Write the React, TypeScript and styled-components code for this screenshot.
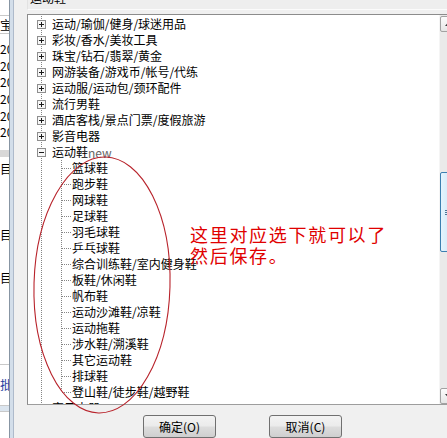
import styled, { createGlobalStyle } from 'styled-components';

const FONT = '"Noto Sans CJK SC", "Noto Sans", sans-serif';

const GlobalStyle = createGlobalStyle`
  html, body {
    margin: 0;
    padding: 0;
    overflow: hidden;
    background: #f0f0f0;
  }
`;

const Screen = styled.div`
  position: relative;
  width: 447px;
  height: 438px;
  overflow: hidden;
  display: flex;
  font-family: ${FONT};
  font-size: 12px;
  color: #000;
  background: #f0f0f0;
`;

/* strip of the window that lies behind the dialog */
const BackTable = styled.div`
  flex: none;
  width: 9px;
  display: flex;
  flex-direction: column;
  background: #fff;
  overflow: hidden;
`;

const BackRow = styled.div<{ $h: number; $line?: boolean; $band?: string; $blue?: boolean }>`
  flex: none;
  height: ${({ $h }) => $h}px;
  line-height: ${({ $h }) => $h}px;
  white-space: nowrap;
  color: ${({ $blue }) => ($blue ? '#1d3b9c' : '#000')};
  background: ${({ $band }) => $band || 'transparent'};
  border-bottom: ${({ $line }) => ($line ? '1px solid #c9c9c9' : 'none')};
`;

const WindowFrame = styled.div`
  flex: none;
  width: 3px;
  border-left: 1px solid #8795a3;
  border-right: 1px solid #aebacb;
  background: #d3deea;
`;

const Dialog = styled.div`
  flex: none;
  width: 460px;
  padding-left: 13px;
  display: flex;
  flex-direction: column;
`;

const TitleField = styled.div`
  height: 13px;
  border-left: 1px solid #e2e2e2;
  border-bottom: 1px solid #fbfbfb;
  background: #eeeeee;
  display: flex;
  align-items: flex-end;
  overflow: hidden;
  padding-left: 2px;
`;

const TitleText = styled.span`
  line-height: 16px;
  padding-bottom: 3px;
`;

const TreeBox = styled.div`
  margin-top: 4px;
  width: 428px;
  height: 389px;
  border: 1px solid #8c8c8c;
  border-bottom-color: #9d9d9d;
  background: #fff;
  display: flex;
`;

const TreeList = styled.div`
  flex: 1;
  padding-top: 1px;
  overflow: hidden;
`;

const Row = styled.div`
  height: 16px;
  display: flex;
  align-items: center;
  padding-left: 3px;
  white-space: nowrap;
`;

const Label = styled.span`
  margin-left: 1px;
  line-height: 16px;
`;

const Faint = styled.span`
  color: #666;
  vertical-align: -1px;
`;

const ScrollBar = styled.div`
  flex: none;
  width: 17px;
  padding-top: 1px;
  display: flex;
  flex-direction: column;
  background: #eaeaea;
  border-left: 1px solid #f5f5f5;
  box-sizing: border-box;
`;

const ArrowButton = styled.div`
  flex: none;
  height: 16px;
  border: 1px solid #a2a2a2;
  border-radius: 2px;
  box-sizing: border-box;
  background: linear-gradient(#fcfcfc, #e6e6e6);
  display: flex;
  align-items: center;
  justify-content: center;
`;

const Track = styled.div`
  flex: 1;
  display: flex;
  flex-direction: column;
`;

const Thumb = styled.div<{ $top: number; $size: number }>`
  margin-top: ${({ $top }) => $top}px;
  height: ${({ $size }) => $size}px;
  border: 1px solid #3c7fb1;
  border-radius: 2px;
  box-sizing: border-box;
  background: linear-gradient(to right, #e6f4fd, #c6e4f8);
  display: flex;
  align-items: center;
  justify-content: center;
`;

const Grip = styled.span`
  width: 7px;
  height: 5px;
  background: repeating-linear-gradient(to bottom, #4f7493 0 1px, transparent 1px 2px);
`;

const ButtonRow = styled.div`
  margin-top: 10px;
  padding-left: 116px;
  display: flex;
  gap: 53px;
`;

const Button = styled.div`
  width: 73px;
  height: 23px;
  box-sizing: border-box;
  border: 1px solid #707070;
  border-radius: 3px;
  background: linear-gradient(#f3f3f3 0%, #ebebeb 48%, #dddddd 52%, #cfcfcf 100%);
  display: flex;
  align-items: center;
  justify-content: center;
  line-height: 16px;
`;

const Annotation = styled.div`
  position: absolute;
  inset: 0;
  pointer-events: none;
`;

const Note = styled.div`
  position: absolute;
  left: 190px;
  top: 224px;
  display: flex;
  flex-direction: column;
  font-size: 18px;
  letter-spacing: 1.7px;
  color: #e00000;
  white-space: nowrap;
`;

const NoteLine = styled.span`
  height: 21px;
  line-height: 21px;
`;

type GlyphProps = { up?: boolean; down?: boolean; branch?: boolean; box?: '+' | '-' };

const TreeGlyph = ({ up, down, branch, box }: GlyphProps) => (
  <svg width="20" height="16" viewBox="0 0 20 16" style={{ flex: 'none' }}>
    <g stroke="#858585" strokeWidth="1" strokeDasharray="1 1">
      {up && <line x1="10.5" y1="0" x2="10.5" y2="8" />}
      {down && <line x1="10.5" y1="8" x2="10.5" y2="16" />}
      {branch && <line x1="11" y1="8.5" x2="20" y2="8.5" />}
    </g>
    {box && (
      <g>
        <rect x="6.5" y="4.5" width="8" height="8" fill="#f7f7f7" stroke="#8e8e8e" />
        <line x1="8" y1="8.5" x2="13" y2="8.5" stroke="#1a1a1a" />
        {box === '+' && <line x1="10.5" y1="6" x2="10.5" y2="11" stroke="#1a1a1a" />}
      </g>
    )}
  </svg>
);

const before = [
  '运动/瑜伽/健身/球迷用品',
  '彩妆/香水/美妆工具',
  '珠宝/钻石/翡翠/黄金',
  '网游装备/游戏币/帐号/代练',
  '运动服/运动包/颈环配件',
  '流行男鞋',
  '酒店客栈/景点门票/度假旅游',
  '影音电器',
];

const shoes = [
  '篮球鞋',
  '跑步鞋',
  '网球鞋',
  '足球鞋',
  '羽毛球鞋',
  '乒乓球鞋',
  '综合训练鞋/室内健身鞋',
  '板鞋/休闲鞋',
  '帆布鞋',
  '运动沙滩鞋/凉鞋',
  '运动拖鞋',
  '涉水鞋/溯溪鞋',
  '其它运动鞋',
  '排球鞋',
  '登山鞋/徒步鞋/越野鞋',
];

const backRows = [
  { h: 15, line: true },
  { h: 17, t: '宝', line: true },
  { h: 6 },
  { h: 17, t: '20' },
  { h: 17, t: '20' },
  { h: 16, t: '20' },
  { h: 17, t: '20' },
  { h: 17, t: '20' },
  { h: 16, t: '20' },
  { h: 10 },
  { h: 7, band: '#d8d8d8' },
  { h: 4 },
  { h: 16, t: '目' },
  { h: 50 },
  { h: 16, t: '目' },
  { h: 27 },
  { h: 16, t: '目' },
  { h: 78, line: true },
  { h: 12 },
  { h: 16, t: '批', blue: true },
  { h: 12, line: true },
  { h: 5, band: '#dbe5ef', line: true },
  { h: 30 },
];

export default function App() {
  return (
    <>
      <GlobalStyle />
      <Screen>
        <BackTable>
          {backRows.map((r, i) => (
            <BackRow key={i} $h={r.h} $line={r.line} $band={r.band} $blue={r.blue}>
              {r.t}
            </BackRow>
          ))}
        </BackTable>
        <WindowFrame />
        <Dialog>
          <TitleField>
            <TitleText>运动鞋</TitleText>
          </TitleField>
          <TreeBox>
            <TreeList>
              {before.map((name) => (
                <Row key={name}>
                  <TreeGlyph up down box="+" />
                  <Label>{name}</Label>
                </Row>
              ))}
              <Row>
                <TreeGlyph up down box="-" />
                <Label>
                  运动鞋<Faint>new</Faint>
                </Label>
              </Row>
              {shoes.map((name, i) => (
                <Row key={name}>
                  <TreeGlyph up down />
                  <TreeGlyph up down={i < shoes.length - 1} branch />
                  <Label>{name}</Label>
                </Row>
              ))}
              <Row>
                <TreeGlyph up down box="+" />
                <Label>家用电器</Label>
              </Row>
            </TreeList>
            <ScrollBar>
              <ArrowButton>
                <svg width="7" height="4" viewBox="0 0 7 4">
                  <path d="M0 4 L3.5 0 L7 4 Z" fill="#3a3a3a" />
                </svg>
              </ArrowButton>
              <Track>
                <Thumb $top={140} $size={80}>
                  <Grip />
                </Thumb>
              </Track>
              <ArrowButton>
                <svg width="7" height="4" viewBox="0 0 7 4">
                  <path d="M0 0 L7 0 L3.5 4 Z" fill="#3a3a3a" />
                </svg>
              </ArrowButton>
            </ScrollBar>
          </TreeBox>
          <ButtonRow>
            <Button>确定(O)</Button>
            <Button>取消(C)</Button>
          </ButtonRow>
        </Dialog>
        <Annotation>
          <svg width="447" height="438" viewBox="0 0 447 438">
            <ellipse
              cx="102"
              cy="285"
              rx="68"
              ry="128"
              fill="none"
              stroke="#b8232b"
              strokeWidth="1.1"
              transform="rotate(1.6 102 285)"
            />
          </svg>
          <Note>
            <NoteLine>这里对应选下就可以了</NoteLine>
            <NoteLine>然后保存。</NoteLine>
          </Note>
        </Annotation>
      </Screen>
    </>
  );
}
